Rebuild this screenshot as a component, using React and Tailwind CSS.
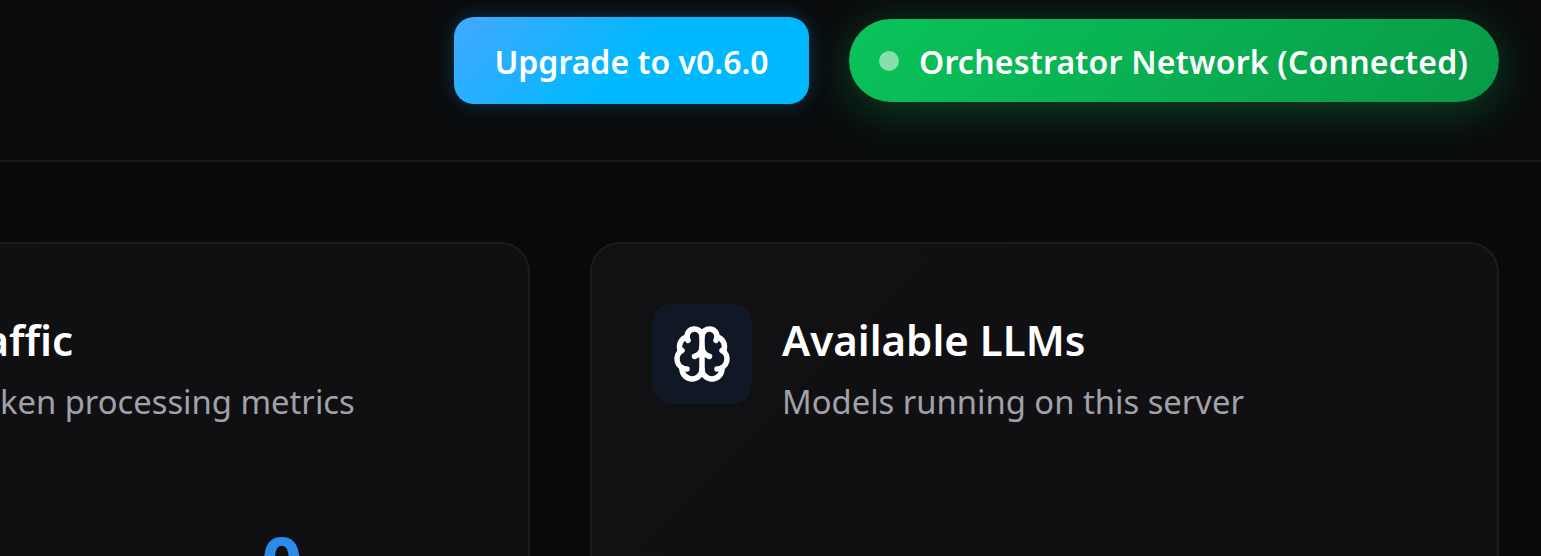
import { Brain } from 'lucide-react'

function Card({ icon, title, subtitle, children }) {
  return (
    <div className="w-[909px] h-[400px] shrink-0 rounded-[30px] border-2 border-[#1c1c1f] bg-[linear-gradient(135deg,#111113,#0f0f11)] px-[60px] pt-[60px]">
      <div className="flex items-start gap-[30px]">
        <div className="flex h-[100px] w-[100px] shrink-0 items-center justify-center rounded-[20px] bg-[#101826] text-white">
          {icon}
        </div>
        <div className="pt-[11px]">
          <h2 className="text-[42px] leading-[50px] font-semibold text-white">{title}</h2>
          <p className="mt-[15px] text-[32.75px] leading-[44px] text-[#a1a1aa]">{subtitle}</p>
        </div>
      </div>
      {children}
    </div>
  )
}

export default function App() {
  return (
    <div className="h-[556px] w-full overflow-hidden bg-[#09090b] font-['Noto_Sans',sans-serif]">
      <header className="flex h-[162px] items-center justify-end gap-[40px] border-b-2 border-[#18181b] bg-[#0a0b0d] pr-[42px] pb-[40px]">
        <button className="h-[87px] w-[355px] rounded-[20px] bg-[linear-gradient(135deg,#44a8ff,#00b8ff_50%)] pt-[3px] text-[32px] font-semibold text-white shadow-[0_0_20px_rgba(0,184,255,0.25)]">
          Upgrade to v0.6.0
        </button>
        <div className="flex h-[83px] w-[650px] items-center gap-[20px] rounded-full bg-[linear-gradient(135deg,#0ac45a,#089a47)] pl-[30px] shadow-[0_8px_48px_rgba(10,199,92,0.3)]">
          <span className="mt-[1px] h-[20px] w-[20px] rounded-full bg-white/50" />
          <span className="pt-[3px] text-[32px] tracking-[0.22px] font-semibold whitespace-nowrap text-white">Orchestrator Network (Connected)</span>
        </div>
      </header>
      <main className="flex justify-end gap-[60px] pt-[80px] pr-[42px]">
        <Card
          icon={<Brain size={60} strokeWidth={2.2} />}
          title="Route Traffic"
          subtitle="Inference token processing metrics"
        >
          <div className="mt-[87px] grid grid-cols-2 gap-[40px]">
            <div />
            <div className="text-center text-[72px] leading-[100px] font-bold text-[#2b8aeb]">0</div>
          </div>
        </Card>
        <Card
          icon={<Brain size={60} strokeWidth={2.2} />}
          title="Available LLMs"
          subtitle="Models running on this server"
        />
      </main>
    </div>
  )
}
